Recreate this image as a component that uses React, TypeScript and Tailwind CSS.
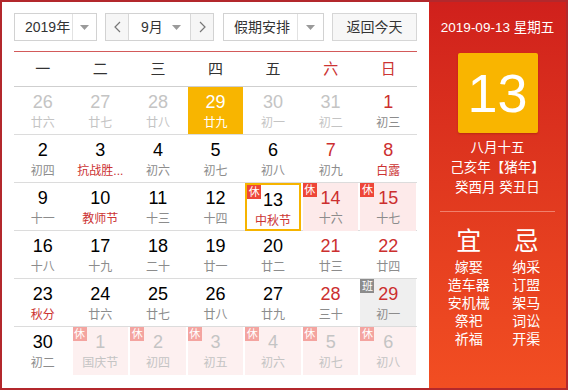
import React from 'react';

type Cell = {
  d: number;
  l: string;
  other?: boolean; // day from another month
  red?: boolean; // red number (weekend)
  lred?: boolean; // red lunar text (festival / solar term)
  sel?: boolean; // yellow filled
  today?: boolean; // yellow outline
  rest?: boolean; // 休
  work?: boolean; // 班
};

const weeks: Cell[][] = [
  [
    { d: 26, l: '廿六', other: true },
    { d: 27, l: '廿七', other: true },
    { d: 28, l: '廿八', other: true },
    { d: 29, l: '廿九', other: true, sel: true },
    { d: 30, l: '初一', other: true },
    { d: 31, l: '初二', other: true },
    { d: 1, l: '初三', red: true },
  ],
  [
    { d: 2, l: '初四' },
    { d: 3, l: '抗战胜...', lred: true },
    { d: 4, l: '初六' },
    { d: 5, l: '初七' },
    { d: 6, l: '初八' },
    { d: 7, l: '初九', red: true },
    { d: 8, l: '白露', red: true, lred: true },
  ],
  [
    { d: 9, l: '十一' },
    { d: 10, l: '教师节', lred: true },
    { d: 11, l: '十三' },
    { d: 12, l: '十四' },
    { d: 13, l: '中秋节', lred: true, today: true, rest: true },
    { d: 14, l: '十六', red: true, rest: true },
    { d: 15, l: '十七', red: true, rest: true },
  ],
  [
    { d: 16, l: '十八' },
    { d: 17, l: '十九' },
    { d: 18, l: '二十' },
    { d: 19, l: '廿一' },
    { d: 20, l: '廿二' },
    { d: 21, l: '廿三', red: true },
    { d: 22, l: '廿四', red: true },
  ],
  [
    { d: 23, l: '秋分', lred: true },
    { d: 24, l: '廿六' },
    { d: 25, l: '廿七' },
    { d: 26, l: '廿八' },
    { d: 27, l: '廿九' },
    { d: 28, l: '三十', red: true },
    { d: 29, l: '初一', red: true, work: true },
  ],
  [
    { d: 30, l: '初二' },
    { d: 1, l: '国庆节', other: true, rest: true },
    { d: 2, l: '初四', other: true, rest: true },
    { d: 3, l: '初五', other: true, rest: true },
    { d: 4, l: '初六', other: true, rest: true },
    { d: 5, l: '初七', other: true, rest: true },
    { d: 6, l: '初八', other: true, rest: true },
  ],
];

const weekdays = ['一', '二', '三', '四', '五', '六', '日'];

const Caret = () => (
  <svg width="9" height="5" viewBox="0 0 9 5">
    <path d="M0 0h9L4.5 5z" fill="#9a9a9a" />
  </svg>
);

const Chevron = ({ left }: { left?: boolean }) => (
  <svg width="7" height="12" viewBox="0 0 7 12">
    <path
      d={left ? 'M6 1L1 6l5 5' : 'M1 1l5 5-5 5'}
      fill="none"
      stroke="#777"
      strokeWidth="1.2"
    />
  </svg>
);

const DayCell = ({ c }: { c: Cell }) => {
  let bg = '';
  if (c.sel) bg = 'bg-[#f8b500]';
  else if (c.work) bg = 'bg-[#efefef]';
  else if (c.rest && !c.today) bg = c.other ? 'bg-[#fdf0f0]' : 'bg-[#fdeaea]';

  const numColor = c.sel
    ? 'text-white'
    : c.other
      ? 'text-[#c4c4c4]'
      : c.red
        ? 'text-[#cc2f2f]'
        : 'text-black';
  const lunarColor = c.sel
    ? 'text-white'
    : c.other
      ? 'text-[#c4c4c4]'
      : c.lred
        ? 'text-[#cc3333]'
        : 'text-[#8c8c8c]';

  return (
    <div className="h-full px-[1px]">
      <div
        className={`relative h-full flex flex-col items-center pt-[5px] ${bg} ${
          c.today ? 'border-2 border-[#f6b400] pt-[3px]' : ''
        }`}
      >
        {(c.rest || c.work) && (
          <span
            className={`absolute top-0 left-0 w-[14px] h-[14px] text-[11px] leading-[14px] text-center text-white ${
              c.work ? 'bg-[#8c8c8c]' : c.other ? 'bg-[#f4a4a0]' : 'bg-[#ee4638]'
            } ${c.today ? '-top-[2px] -left-[2px]' : ''}`}
          >
            {c.work ? '班' : '休'}
          </span>
        )}
        <span className={`text-[18px] leading-[20px] ${numColor}`}>{c.d}</span>
        <span className={`mt-[3px] text-[12px] leading-[16px] whitespace-nowrap ${lunarColor}`}>
          {c.l}
        </span>
      </div>
    </div>
  );
};

export default function App() {
  return (
    <div className="w-[568px] h-[390px] border-2 border-[#b3282c] flex font-['Liberation_Sans','Noto_Sans_CJK_SC',sans-serif] bg-white">
      {/* calendar */}
      <div className="w-[427px] px-[12px] pt-[11px]">
        <div className="flex h-[28px] text-[14px] text-[#333]">
          <div className="w-[83px] flex border border-[#d2d2d2]">
            <div className="w-[57px] flex items-center pl-[10px]">2019年</div>
            <div className="flex-1 flex items-center justify-center border-l border-[#e2e2e2]">
              <Caret />
            </div>
          </div>
          <div className="ml-[8px] w-[109px] flex border border-[#d2d2d2]">
            <div className="w-[23px] flex items-center justify-center bg-[#f6f6f6] border-r border-[#d8d8d8]">
              <Chevron left />
            </div>
            <div className="flex-1 flex items-center justify-between pl-[12px] pr-[9px]">
              <span>9月</span>
              <Caret />
            </div>
            <div className="w-[23px] flex items-center justify-center bg-[#f6f6f6] border-l border-[#d8d8d8]">
              <Chevron />
            </div>
          </div>
          <div className="ml-[9px] w-[101px] flex border border-[#d2d2d2]">
            <div className="w-[73px] flex items-center pl-[10px]">假期安排</div>
            <div className="flex-1 flex items-center justify-center border-l border-[#e2e2e2]">
              <Caret />
            </div>
          </div>
          <div className="ml-[8px] w-[85px] flex items-center justify-center border border-[#d6d6d6] bg-[#f7f7f7]">
            返回今天
          </div>
        </div>

        <div className="mt-[10px] grid grid-cols-7 h-[36px] border-t border-b border-t-[#d35a5a] border-b-[#cfcfcf] text-[15px]">
          {weekdays.map((w, i) => (
            <div
              key={w}
              className={`flex items-center justify-center ${i >= 5 ? 'text-[#cc3333]' : 'text-[#333]'}`}
            >
              {w}
            </div>
          ))}
        </div>

        {weeks.map((row, r) => (
          <div
            key={r}
            className={`grid grid-cols-7 h-[48px] ${r < 5 ? 'border-b border-[#dcdcdc]' : ''}`}
          >
            {row.map((c, i) => (
              <DayCell key={i} c={c} />
            ))}
          </div>
        ))}
      </div>

      {/* detail panel */}
      <div className="flex-1 bg-gradient-to-b from-[#d0201c] to-[#f24e22] text-white flex flex-col items-center pt-[18px]">
        <div className="text-[13.5px] leading-[16px]">2019-09-13 星期五</div>
        <div className="mt-[17px] w-[80px] h-[80px] rounded-[2px] bg-[#f9b500] shadow-[0_1px_2px_rgba(120,20,0,0.35)] flex items-center justify-center text-[54px] leading-none">
          13
        </div>
        <div className="mt-[5px] text-[13.5px] leading-[20px] text-center">
          <div>八月十五</div>
          <div>己亥年【猪年】</div>
          <div>癸酉月 癸丑日</div>
        </div>
        <div className="mt-[13px] self-stretch mx-[11px] h-px bg-[#f0806c]" />
        <div className="self-stretch mx-[11px] mt-[14px] grid grid-cols-2 text-center">
          <div>
            <div className="text-[25px] leading-[30px]">宜</div>
            <div className="mt-[2px] text-[14px] leading-[18px]">
              <div>嫁娶</div>
              <div>造车器</div>
              <div>安机械</div>
              <div>祭祀</div>
              <div>祈福</div>
            </div>
          </div>
          <div>
            <div className="text-[25px] leading-[30px]">忌</div>
            <div className="mt-[2px] text-[14px] leading-[18px]">
              <div>纳采</div>
              <div>订盟</div>
              <div>架马</div>
              <div>词讼</div>
              <div>开渠</div>
            </div>
          </div>
        </div>
      </div>
    </div>
  );
}
